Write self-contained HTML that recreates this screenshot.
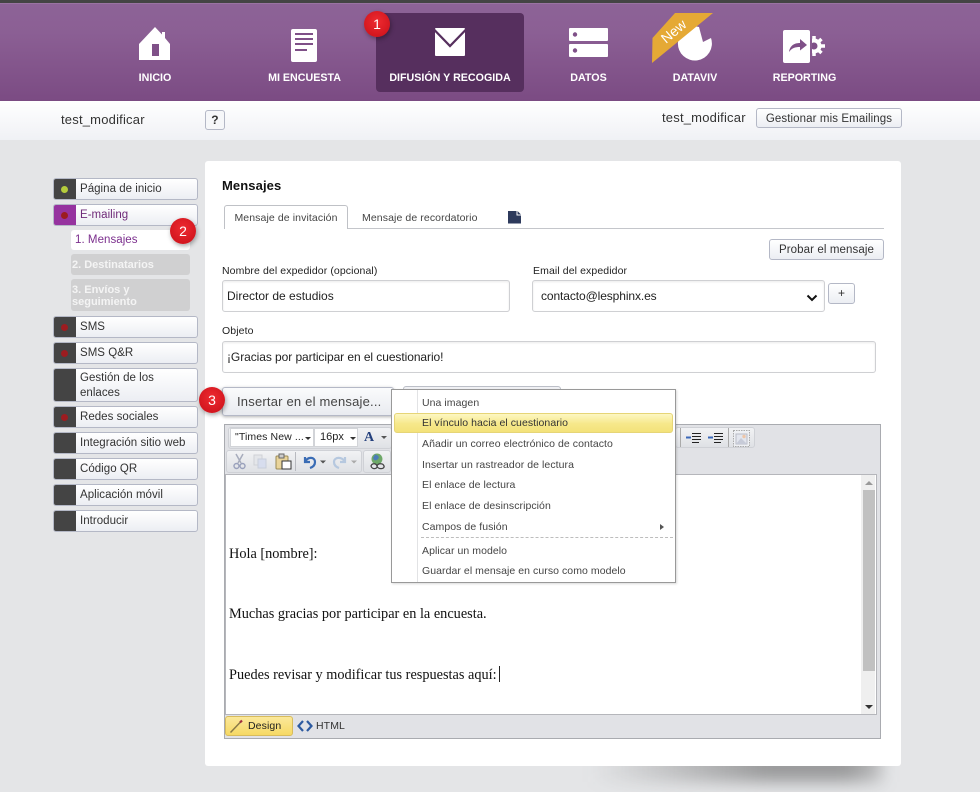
<!DOCTYPE html>
<html lang="es"><head><meta charset="utf-8"><title>Mensajes</title>
<style>
*{box-sizing:border-box}
html,body{margin:0;padding:0}
body{width:980px;height:792px;overflow:hidden;position:relative;background:#e4e5e7;font-family:"Liberation Sans",Arial,sans-serif;color:#222;font-size:12px}
.a{position:absolute}
.t{position:absolute;white-space:nowrap}
.nav{position:absolute;top:71.5px;color:#fff;font-weight:bold;font-size:10.7px;line-height:13px;text-align:center;white-space:nowrap;transform:translateX(-50%)}
.side{position:absolute;left:53px;width:145px;border:1px solid #b4b8c6;border-radius:3px;background:linear-gradient(#fff,#eceef3);color:#333;font-size:11.5px;line-height:15px;padding:0 0 0 26px;display:flex;align-items:center;letter-spacing:.03px}
.side i{position:absolute;left:0;top:0;bottom:0;width:22px;background:#444;border-radius:2px 0 0 2px}
.side b{position:absolute;left:7px;top:50%;margin-top:-3.5px;width:7px;height:7px;border-radius:50%;background:#9c1c20}
.sub{position:absolute;left:71px;width:119px;border-radius:3px;background:#d0d0d1;color:#f4f4f4;font-weight:bold;font-size:11px;line-height:12px;padding:6px 1px}
.badge{position:absolute;width:26px;height:26px;border-radius:50%;background:radial-gradient(circle at 50% 40%,#ee2a30,#c80f18);color:#fff;font-size:14px;line-height:26px;text-align:center;box-shadow:1px 2px 5px rgba(0,0,0,.35);z-index:9}
.lbl{position:absolute;font-size:10.5px;letter-spacing:.1px;color:#222;white-space:nowrap}
.inp{position:absolute;background:#fff;border:1px solid #cfd0d3;border-radius:3px;box-shadow:inset 0 1px 2px rgba(0,0,0,.08);font-size:12px;color:#222;display:flex;align-items:center;padding-left:4px;white-space:nowrap}
.btn{position:absolute;border:1px solid #b4b8c6;border-radius:3px;background:linear-gradient(#fff,#eceef3);color:#333;font-size:11.5px;letter-spacing:.1px;text-align:center;white-space:nowrap}
.mi{position:absolute;left:30px;font-size:10.5px;color:#444;white-space:nowrap;letter-spacing:.06px}
.tb{position:absolute;border:1px solid #cfd1d6;border-radius:3px;background:linear-gradient(#f1f2f4,#dfe1e5)}
</style></head><body>

<div class="a" style="left:0;top:0;width:980px;height:3px;background:#444"></div>
<div class="a" style="left:0;top:3px;width:980px;height:98px;background:linear-gradient(#8d6397 0,#8b5f94 30%,#7b4b83 100%);border-top:1px solid #9a73a2"></div>
<div class="a" style="left:376px;top:13px;width:148px;height:79px;background:#562f5e;border-radius:4px"></div>

<!-- home -->
<svg class="a" style="left:138px;top:27px" width="34" height="34" viewBox="0 0 34 34"><path d="M1 17 L17 0 L24 7.500 V5 H27 V11 L32 17 V33 H1Z" fill="#fff"/><rect x="14" y="17" width="7" height="12" fill="#7f5088"/></svg>
<div class="nav" style="left:155px">INICIO</div>
<!-- doc -->
<svg class="a" style="left:290px;top:28px" width="28" height="35" viewBox="0 0 28 35"><rect x="1" y="1" width="26" height="33" rx="2" fill="#fff"/><path d="M5 6H23M5 11H23M5 16H23M5 22H17" stroke="#7f5088" stroke-width="2" fill="none"/></svg>
<div class="nav" style="left:304.500px">MI ENCUESTA</div>
<!-- mail -->
<svg class="a" style="left:434px;top:27px" width="32" height="30" viewBox="0 0 32 30"><rect x="1" y="1" width="30" height="28" rx="1" fill="#fff"/><path d="M0 2.500 L16 19 L32 2.500" stroke="#562f5e" stroke-width="2.200" fill="none"/></svg>
<div class="nav" style="left:450px">DIFUSIÓN Y RECOGIDA</div>
<!-- datos -->
<svg class="a" style="left:568px;top:27px" width="42" height="32" viewBox="0 0 42 32"><rect x="1" y="1" width="39" height="13" rx="1" fill="#fff"/><rect x="1" y="17" width="39" height="13" rx="1" fill="#fff"/><circle cx="7" cy="7.500" r="2.200" fill="#7f5088"/><circle cx="7" cy="23.500" r="2.200" fill="#7f5088"/></svg>
<div class="nav" style="left:588.500px">DATOS</div>
<!-- dataviv -->
<svg class="a" style="left:652px;top:13px" width="62" height="50" viewBox="0 0 62 50"><path d="M51 29 L47 14 A17 17 0 1 0 59 25 Z" fill="#fff"/><path d="M0.500 25 L23 0 H61 L0 50Z" fill="#e5a935"/><text transform="translate(14,31) rotate(-40)" font-family="Liberation Sans,sans-serif" font-size="14" fill="#fff">New</text></svg>
<div class="nav" style="left:695px">DATAVIV</div>
<!-- reporting -->
<svg class="a" style="left:782px;top:29px" width="44" height="35" viewBox="0 0 44 35"><defs><clipPath id="gc"><rect x="30" y="0" width="14" height="35"/></clipPath></defs><rect x="1" y="1" width="27" height="33" rx="2" fill="#fff"/><path d="M7 23 C8 16 13 14 18 14 V10 L25 16 L18 21.500 V18 C13 18 10 19 7 23Z" fill="#7f5088"/><g clip-path="url(#gc)"><circle cx="32" cy="17" r="7.500" fill="#fff"/><path d="M32 17V7M32 17L39.500 10M32 17H43M32 17L39.500 24M32 17V27" stroke="#fff" stroke-width="3.500"/><circle cx="32" cy="17" r="3.500" fill="#7f5088"/></g></svg>
<div class="nav" style="left:804.500px">REPORTING</div>

<div class="badge" style="left:364px;top:11px">1</div>

<!-- sub header -->
<div class="a" style="left:0;top:101px;width:980px;height:39px;background:linear-gradient(#fff,#f0f1f5)"></div>
<div class="t" style="left:61px;top:112px;font-size:13px;color:#333;letter-spacing:.2px">test_modificar</div>
<div class="btn" style="left:205px;top:110px;width:20px;height:20px;font-weight:bold;line-height:18px;font-size:12px;background:#f6f7f9">?</div>
<div class="t" style="left:662px;top:110px;font-size:13px;color:#333;letter-spacing:.2px">test_modificar</div>
<div class="btn" style="left:756px;top:108px;width:146px;height:20px;line-height:20px">Gestionar mis Emailings</div>

<!-- sidebar -->
<div class="side" style="top:178px;height:22px"><i></i><b style="background:#b5cc3c"></b>Página de inicio</div>
<div class="side" style="top:204px;height:22px;color:#6f2a78"><i style="background:#96339f"></i><b></b>E-mailing</div>
<div class="sub" style="top:230px;height:20px;background:#fff;color:#7b2e8d;font-weight:normal;font-size:11.5px;padding:4px 4px 0;letter-spacing:.05px;line-height:13px">1. Mensajes</div>
<div class="sub" style="top:254px;height:21px;padding-top:5px;line-height:13px">2. Destinatarios</div>
<div class="sub" style="top:279px;height:32px;padding-top:5px">3. Envíos y seguimiento</div>
<div class="side" style="top:316px;height:22px"><i></i><b></b>SMS</div>
<div class="side" style="top:342px;height:22px"><i></i><b></b>SMS Q&amp;R</div>
<div class="side" style="top:368px;height:34px;padding-top:1px;padding-right:20px"><i></i>Gestión de los enlaces</div>
<div class="side" style="top:406px;height:22px"><i></i><b></b>Redes sociales</div>
<div class="side" style="top:432px;height:22px"><i></i>Integración sitio web</div>
<div class="side" style="top:458px;height:22px"><i></i>Código QR</div>
<div class="side" style="top:484px;height:22px"><i></i>Aplicación móvil</div>
<div class="side" style="top:510px;height:22px"><i></i>Introducir</div>
<div class="badge" style="left:170px;top:218px">2</div>

<!-- card shadow -->
<div class="a" style="left:590px;top:750px;width:292px;height:32px;background:linear-gradient(90deg,rgba(80,80,80,0),rgba(80,80,80,.5) 60%,rgba(80,80,80,.5) 88%,rgba(80,80,80,.25));filter:blur(8px)"></div>
<div class="a" style="left:205px;top:161px;width:696px;height:605px;background:#fff;border-radius:3px"></div>

<div class="t" style="left:222px;top:178px;font-size:13px;font-weight:bold;color:#111;letter-spacing:.1px">Mensajes</div>
<!-- tabs -->
<div class="a" style="left:224px;top:228px;width:660px;height:1px;background:#c4c6cb"></div>
<div class="a" style="left:224px;top:205px;width:124px;height:24px;background:#fff;border:1px solid #bfc1c6;border-bottom:0;border-radius:3px 3px 0 0;font-size:10.5px;color:#444;text-align:center;line-height:24px;letter-spacing:.1px">Mensaje de invitación</div>
<div class="t" style="left:362px;top:212px;font-size:10.5px;color:#444;letter-spacing:.1px">Mensaje de recordatorio</div>
<svg class="a" style="left:508px;top:211px" width="14" height="13" viewBox="0 0 14 13"><path d="M0 0H8.500V4.500H13V12.500H0Z" fill="#2d3a5c"/><path d="M9.500 0L13 3.500H9.500Z" fill="#2d3a5c"/></svg>

<div class="btn" style="left:769px;top:239px;width:115px;height:21px;line-height:21px">Probar el mensaje</div>
<div class="lbl" style="left:222px;top:265px">Nombre del expedidor (opcional)</div>
<div class="inp" style="left:222px;top:280px;width:288px;height:32px">Director de estudios</div>
<div class="lbl" style="left:533px;top:265px">Email del expedidor</div>
<div class="inp" style="left:532px;top:280px;width:293px;height:32px;padding-left:8px;letter-spacing:-.1px">contacto@lesphinx.es
<svg class="a" style="right:6px;top:13px" width="12" height="8" viewBox="0 0 12 8"><path d="M1.500 1.500L6 6L10.500 1.500" stroke="#111" stroke-width="2" fill="none"/></svg></div>
<div class="btn" style="left:828px;top:283px;width:27px;height:21px;line-height:18px;font-size:12px">+</div>
<div class="lbl" style="left:222px;top:325px">Objeto</div>
<div class="inp" style="left:222px;top:341px;width:654px;height:32px;letter-spacing:-.07px">¡Gracias por participar en el cuestionario!</div>

<!-- editor -->
<div class="a" style="left:224px;top:424px;width:657px;height:315px;background:#e1e2e6;border:1px solid #a9abb0"></div>
<div class="a" style="left:225px;top:474px;width:652px;height:241px;background:#fff;border:1px solid #b5b6bb"></div>
<div class="a" style="left:861px;top:475px;width:14px;height:239px;background:#efefef"></div>
<div class="a" style="left:863px;top:490px;width:12px;height:181px;background:#c1c1c1"></div>
<div class="a" style="left:865px;top:481px;width:0;height:0;border:4px solid transparent;border-bottom:4px solid #999;border-top:0"></div>
<div class="a" style="left:865px;top:705px;width:0;height:0;border:4px solid transparent;border-top:4px solid #333;border-bottom:0"></div>

<!-- toolbar row 1 -->
<div class="tb" style="left:228px;top:427px;width:164px;height:22px"></div>
<div class="a" style="left:230px;top:428px;width:84px;height:19px;background:#fff;border:1px solid #d2d4d8;font-size:10.5px;color:#222;line-height:17px;padding-left:4px;white-space:nowrap;letter-spacing:.1px">"Times New ...</div>
<div class="a" style="left:305px;top:437px;border:3px solid transparent;border-top:3px solid #333"></div>
<div class="a" style="left:314px;top:428px;width:44px;height:19px;background:#fff;border:1px solid #d2d4d8;font-size:11px;color:#222;line-height:17px;padding-left:5px">16px</div>
<div class="a" style="left:350px;top:437px;border:3px solid transparent;border-top:3px solid #333"></div>
<div class="t" style="left:364px;top:430px;font-family:'Liberation Serif',serif;font-size:14px;font-weight:bold;color:#24407c">A</div>
<div class="a" style="left:381px;top:436px;border:3px solid transparent;border-top:3px solid #555"></div>
<div class="tb" style="left:675px;top:427px;width:80px;height:21px"></div>
<div class="a" style="left:680px;top:428px;width:1px;height:19px;background:#aaa"></div>
<div class="a" style="left:728px;top:428px;width:1px;height:19px;background:#aaa"></div>
<svg class="a" style="left:685px;top:430px" width="40" height="16" viewBox="0 0 40 16"><path d="M7 3.500H16M7 6.500H16M7 9.500H16M7 12.500H14" stroke="#222" stroke-width="1" fill="none"/><path d="M1 7.500H6" stroke="#3a68b8" stroke-width="2"/><path d="M29 3.500H38M29 6.500H38M29 9.500H38M29 12.500H36" stroke="#222" stroke-width="1" fill="none"/><path d="M23 7.500H28" stroke="#3a68b8" stroke-width="2"/></svg>
<svg class="a" style="left:733px;top:430px" width="18" height="17" viewBox="0 0 18 17"><rect x=".5" y=".5" width="16" height="16" fill="#eef0f4" stroke="#aaa" stroke-dasharray="1.500 1"/><rect x="3" y="4" width="11" height="10" fill="#e3e6ee" stroke="#b9bcc6"/><path d="M3 14L8 8L14 14Z" fill="#c7cbd8"/><circle cx="11" cy="6.500" r="1.700" fill="#eec6a8"/></svg>

<!-- toolbar row 2 -->
<div class="tb" style="left:226px;top:450px;width:136px;height:23px"></div>
<div class="tb" style="left:363px;top:450px;width:28px;height:23px"></div>
<div class="a" style="left:295px;top:452px;width:1px;height:19px;background:#b8bac0"></div>
<svg class="a" style="left:233px;top:453px" width="60" height="17" viewBox="0 0 60 17"><path d="M3 1L8 10M10 1L5 10" stroke="#a7acbc" stroke-width="1.500" fill="none"/><circle cx="3.500" cy="13" r="2.500" fill="none" stroke="#9aa1bc" stroke-width="1.400"/><circle cx="9.500" cy="13" r="2.500" fill="none" stroke="#9aa1bc" stroke-width="1.400"/><rect x="21" y="2" width="8" height="10" fill="#e4e6ea" stroke="#cfd1d6"/><rect x="25" y="6" width="8" height="9" fill="#d7ddee" stroke="#c8cedb"/><rect x="43" y="3" width="12" height="13" rx="1" fill="#e9d49b" stroke="#9a8a55"/><rect x="46" y="1" width="5" height="4" fill="#ccc" stroke="#666"/><rect x="49" y="8" width="9" height="8" fill="#fff" stroke="#333"/></svg>
<svg class="a" style="left:302px;top:454px" width="60" height="15" viewBox="0 0 60 15"><path d="M3 3 V8 H8 M3 8 C6 2 13 3 13 8 C13 11 11 13 8 14" stroke="#3a6cb5" stroke-width="2.200" fill="none"/><path d="M18 6.500h6l-3 3z" fill="#555"/><path d="M43 3 V8 H38 M43 8 C40 2 32 3 32 8 C32 11 34 13 37 14" stroke="#b6c8df" stroke-width="2.200" fill="none"/><path d="M49 6.500h6l-3 3z" fill="#aaa"/></svg>
<svg class="a" style="left:369px;top:453px" width="17" height="18" viewBox="0 0 17 18"><circle cx="8" cy="6" r="5.500" fill="#6ea868"/><path d="M6 1.500C9 2 11 4 9 6S5 8 4 5" fill="#4b7cb8"/><path d="M2 13C3 10 7 10 8 13S3 17 2 13ZM8 13C9 10 14 10 15 13S9 17 8 13Z" fill="none" stroke="#444" stroke-width="1.300"/></svg>

<!-- content -->
<div class="t" style="left:229px;top:546px;font-family:'Liberation Serif',serif;font-size:14.3px;color:#111">Hola [nombre]:</div>
<div class="t" style="left:229px;top:606px;font-family:'Liberation Serif',serif;font-size:14.3px;color:#111">Muchas gracias por participar en la encuesta.</div>
<div class="t" style="left:229px;top:667px;font-family:'Liberation Serif',serif;font-size:14.3px;color:#111">Puedes revisar y modificar tus respuestas aquí:</div>
<div class="a" style="left:499px;top:666px;width:1px;height:16px;background:#222"></div>

<!-- footer tabs -->
<div class="a" style="left:225px;top:716px;width:68px;height:20px;background:linear-gradient(#fbe89a,#f6d964);border:1px solid #d8bc5c;border-radius:3px;font-size:10.5px;line-height:19px;padding-left:22px;color:#222;letter-spacing:.1px">Design</div>
<svg class="a" style="left:229px;top:719px" width="16" height="15" viewBox="0 0 16 15"><path d="M1.500 13.500L12 2.500" stroke="#8a7a48" stroke-width="1.500"/><path d="M11 3.500L13 1.500" stroke="#a03040" stroke-width="2.200"/></svg>
<svg class="a" style="left:297px;top:720px" width="16" height="12" viewBox="0 0 16 12"><path d="M6 1L1.500 6L6 11M10 1L14.500 6L10 11" stroke="#2d5aa0" stroke-width="2.200" fill="none"/></svg>
<div class="t" style="left:316px;top:720px;font-size:10.5px;color:#333;letter-spacing:.1px">HTML</div>

<!-- insert buttons -->
<div class="a" style="left:403px;top:386px;width:158px;height:20px;background:#f0f1f4;border:1px solid #bcbfc8;border-radius:3px"></div>
<div class="btn" style="left:222px;top:387px;width:172px;height:29px;line-height:27px;font-size:13px;color:#444;letter-spacing:.2px;text-align:left;padding-left:14px;box-shadow:0 1px 3px rgba(0,0,0,.3);background:linear-gradient(#fafbfc,#e9ebf0)">Insertar en el mensaje...</div>
<div class="badge" style="left:199px;top:387px;z-index:9">3</div>

<!-- menu -->
<div class="a" style="left:391px;top:389px;width:285px;height:194px;background:#fff;border:1px solid #999;box-shadow:1px 1px 2px rgba(0,0,0,.15);z-index:5">
  <div class="a" style="left:25px;top:0;bottom:0;width:1px;background:#e2e3e5"></div>
  <div class="a" style="left:2px;top:23px;width:279px;height:20px;background:linear-gradient(#fdf7c3,#f6e88a 55%,#f3e27a);border:1px solid #e6d577;border-radius:3px"></div>
  <div class="mi" style="top:7px">Una imagen</div>
  <div class="mi" style="top:27px;color:#333">El vínculo hacia el cuestionario</div>
  <div class="mi" style="top:48px">Añadir un correo electrónico de contacto</div>
  <div class="mi" style="top:69px">Insertar un rastreador de lectura</div>
  <div class="mi" style="top:89px">El enlace de lectura</div>
  <div class="mi" style="top:110px">El enlace de desinscripción</div>
  <div class="mi" style="top:131px">Campos de fusión</div>
  <div class="a" style="left:268px;top:134px;border:3px solid transparent;border-left:4px solid #555"></div>
  <div class="a" style="left:29px;top:147px;width:252px;border-top:1px dashed #bdbdbd"></div>
  <div class="mi" style="top:155px">Aplicar un modelo</div>
  <div class="mi" style="top:175px">Guardar el mensaje en curso como modelo</div>
</div>

</body></html>
